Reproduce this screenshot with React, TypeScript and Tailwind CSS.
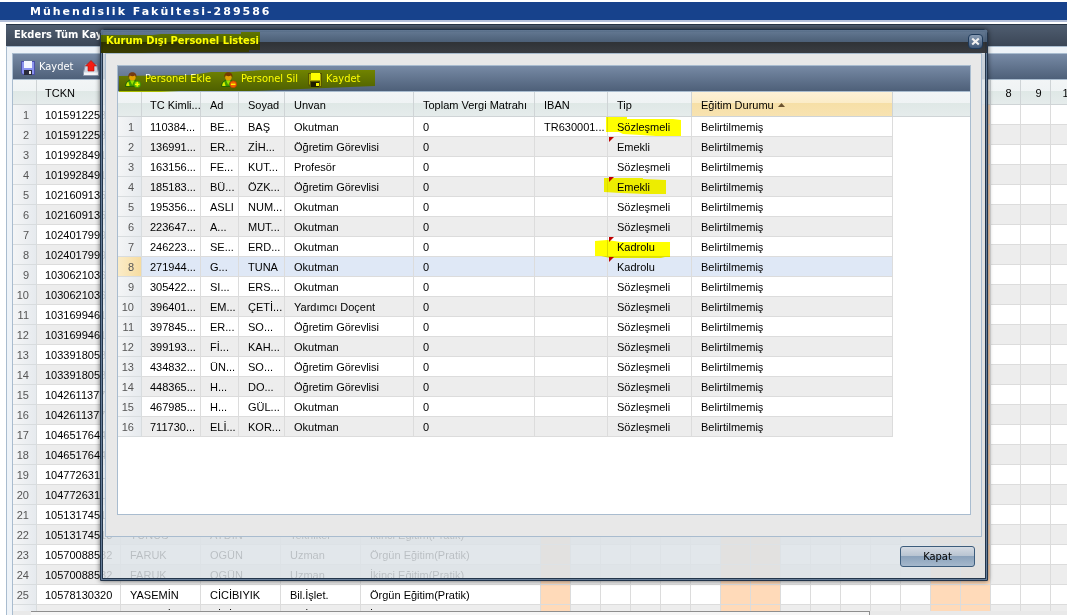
import React from 'react';

interface PersonRow {
  tc: string;
  ad: string;
  soyad: string;
  unvan: string;
  iban?: string;
  tip: string;
  dirty?: boolean;
}

const people: PersonRow[] = [
  { tc: '110384...', ad: 'BE...', soyad: 'BAŞ', unvan: 'Okutman', iban: 'TR630001...', tip: 'Sözleşmeli' },
  { tc: '136991...', ad: 'ER...', soyad: 'ZİH...', unvan: 'Öğretim Görevlisi', tip: 'Emekli', dirty: true },
  { tc: '163156...', ad: 'FE...', soyad: 'KUT...', unvan: 'Profesör', tip: 'Sözleşmeli' },
  { tc: '185183...', ad: 'BÜ...', soyad: 'ÖZK...', unvan: 'Öğretim Görevlisi', tip: 'Emekli', dirty: true },
  { tc: '195356...', ad: 'ASLI', soyad: 'NUM...', unvan: 'Okutman', tip: 'Sözleşmeli' },
  { tc: '223647...', ad: 'A...', soyad: 'MUT...', unvan: 'Okutman', tip: 'Sözleşmeli' },
  { tc: '246223...', ad: 'SE...', soyad: 'ERD...', unvan: 'Okutman', tip: 'Kadrolu', dirty: true },
  { tc: '271944...', ad: 'G...', soyad: 'TUNA', unvan: 'Okutman', tip: 'Kadrolu', dirty: true },
  { tc: '305422...', ad: 'SI...', soyad: 'ERS...', unvan: 'Okutman', tip: 'Sözleşmeli' },
  { tc: '396401...', ad: 'EM...', soyad: 'ÇETİ...', unvan: 'Yardımcı Doçent', tip: 'Sözleşmeli' },
  { tc: '397845...', ad: 'ER...', soyad: 'SO...', unvan: 'Öğretim Görevlisi', tip: 'Sözleşmeli' },
  { tc: '399193...', ad: 'Fİ...', soyad: 'KAH...', unvan: 'Okutman', tip: 'Sözleşmeli' },
  { tc: '434832...', ad: 'ÜN...', soyad: 'SO...', unvan: 'Öğretim Görevlisi', tip: 'Sözleşmeli' },
  { tc: '448365...', ad: 'H...', soyad: 'DO...', unvan: 'Öğretim Görevlisi', tip: 'Sözleşmeli' },
  { tc: '467985...', ad: 'H...', soyad: 'GÜL...', unvan: 'Okutman', tip: 'Sözleşmeli' },
  { tc: '711730...', ad: 'ELİ...', soyad: 'KOR...', unvan: 'Okutman', tip: 'Sözleşmeli' },
];

const SELECTED = 7;

// every person has one row for day classes and one for evening classes
const lecturers = [
  ['10159122538', '', '', ''],
  ['10199284911', '', '', ''],
  ['10216091356', '', '', ''],
  ['10240179999', '', '', ''],
  ['10306210366', '', '', ''],
  ['10316994611', '', '', ''],
  ['10339180588', '', '', ''],
  ['10426113772', '', '', ''],
  ['10465176444', '', '', ''],
  ['10477263112', '', '', ''],
  ['10513174518', 'YUNUS', 'AYDIN', 'Tekniker'],
  ['10570088582', 'FARUK', 'OGÜN', 'Uzman'],
  ['10578130320', 'YASEMİN', 'CİCİBIYIK', 'Bil.İşlet.'],
];

const days = [24, 25, 26, 27, 28, 29, 30, 31, 1, 2, 3, 4, 5, 6, 7, 8, 9, 10];
const weekend = [24, 30, 31, 6, 7];

const thBase = 'h-[25px] border-r border-b border-[#cfd4d6] pt-0.5 text-left font-normal whitespace-nowrap overflow-hidden';
const tdBase = 'h-5 border-r border-b border-[#dcdcdc] pt-0.5 whitespace-nowrap overflow-hidden';
const thClass = `${thBase} pl-[9px]`;
const tdClass = `${tdBase} pl-[9px]`;
const numClass = 'h-5 border-r border-b border-[#d8dcde] pt-0.5 pr-[7px] text-right text-[#555]';
const headFill = 'bg-[linear-gradient(#f2f5f6_0%,#eff3f4_45%,#dfe8e6_46%,#e6ecec_100%)]';
const toolbar = 'flex h-[26px] items-center border-b border-[#a9bccf] bg-linear-to-b from-[#778aa5] to-[#4e6079] pt-0.5 text-[11px] text-white';

const FloppyIcon = () => (
  <svg viewBox="0 0 14 14" className="size-3.5" aria-hidden="true">
    <path d="M0 0H14V14H2L0 12Z" fill="#4c50a8" />
    <path d="M1 1H3V7H11V1H13V13H2L1 12Z" fill="#8a92ee" />
    <rect x="3" y="0" width="8" height="7" fill="#f4f6ff" />
    <rect x="3" y="9" width="8" height="5" fill="#2b2c3c" />
    <rect x="8" y="10" width="2" height="3" fill="#f0f0f0" />
  </svg>
);

const FloppyPlainIcon = () => (
  <svg viewBox="0 0 14 14" className="size-3.5" aria-hidden="true">
    <path d="M0 0H14V14H2L0 12Z" fill="#55554a" />
    <path d="M1 1H13V13H12V8H2V12L1 11Z" fill="#a8a8a0" />
    <rect x="3" y="0" width="9" height="7" fill="#ffffff" />
    <rect x="3" y="9" width="8" height="5" fill="#1c1c14" />
    <rect x="8" y="10" width="3" height="3" fill="#f6f6f6" />
  </svg>
);

const UploadIcon = () => (
  <svg viewBox="0 0 16 16" className="size-4" aria-hidden="true">
    <path d="M2.5 4.5H13.5L15.5 12.5V15.5H.5V12.5Z" fill="#cfd7e3" stroke="#8b97ab" />
    <path d="M1 12.5H15V15H1Z" fill="#f3f5f9" />
    <path d="M8 .5L13.5 6H11V11H5V6H2.5Z" fill="#f51d14" stroke="#b00e08" strokeWidth=".6" />
  </svg>
);

const PersonIcon = ({ remove = false }: { remove?: boolean }) => (
  <svg viewBox="0 0 16 16" className="size-4" aria-hidden="true">
    <path d="M.6 14.4C.6 10.5 3 8 7 8S12.6 10 12.8 14.4Z" fill="#3f9c2c" stroke="#185a18" strokeWidth=".8" />
    <path d="M5 8.3L7.2 13L9.6 8.3Z" fill="#9be05c" />
    <path d="M1.2 14C1.4 11.6 2.2 10.4 3.4 9.8L4.6 14Z" fill="#d8ecc4" />
    <circle cx="7.4" cy="5.2" r="3.2" fill="#e3a064" />
    <path d="M3.4 5.6C2.8 1.8 5 .2 7.4 .2S12 1.8 11.4 5.6L10 3.6C8.4 4.4 6.4 4.4 4.8 3.6Z" fill="#753b12" />
    <circle cx="12.2" cy="12.3" r="3.4" fill={remove ? '#f2642c' : '#6fc836'} stroke={remove ? '#c23a10' : '#37861a'} strokeWidth=".7" />
    <path d={remove ? 'M10 12.3H14.4' : 'M10 12.3H14.4M12.2 10.1V14.5'} stroke="#fff" strokeWidth="1.3" />
  </svg>
);

const ToolButton = ({ icon, label }: { icon: React.ReactNode; label: string }) => (
  <button type="button" className="flex items-center gap-1">
    {icon}
    {label}
  </button>
);

const BackgroundGrid = () => (
  <div className="min-h-0 flex-1 overflow-hidden bg-white">
    <table className="w-[1068px] table-fixed border-separate border-spacing-0 font-['Liberation_Sans',Arial,sans-serif]">
      <colgroup>
        <col className="w-6" />
        <col className="w-[84px]" />
        <col className="w-20" />
        <col className="w-20" />
        <col className="w-20" />
        <col className="w-[180px]" />
        {days.map((d) => <col key={d} className="w-[30px]" />)}
      </colgroup>
      <thead className={headFill}>
        <tr>
          <th className={thClass}></th>
          <th className={`${thBase} pl-2`}>TCKN</th>
          <th className={thClass}>Ad</th>
          <th className={thClass}>Soyad</th>
          <th className={thClass}>Unvan</th>
          <th className={thClass}>Öğretim Türü</th>
          {days.map((d) => (
            <th key={d} className="h-[25px] border-r border-b border-[#cfd4d6] pt-0.5 pl-1.5 font-normal">{d}</th>
          ))}
        </tr>
      </thead>
      <tbody>
        {lecturers.flatMap(([tckn, ad, soyad, unvan], i) => [0, 1].map((k) => (
          <tr key={`${tckn}-${k}`} className={k ? 'bg-[#ededed]' : 'bg-white'}>
            <td className={`${numClass} bg-linear-to-r from-[#f4f5f6] to-[#e6eaee]`}>{i * 2 + k + 1}</td>
            <td className={`${tdBase} pl-2`}>{tckn}</td>
            <td className={tdClass}>{ad}</td>
            <td className={tdClass}>{soyad}</td>
            <td className={tdClass}>{unvan}</td>
            <td className={tdClass}>{ad && (k ? 'İkinci Eğitim(Pratik)' : 'Örgün Eğitim(Pratik)')}</td>
            {days.map((d) => (
              <td key={d} className={`border-r border-b border-[#dcdcdc] ${weekend.includes(d) ? 'bg-[#ffdab9]' : ''}`}></td>
            ))}
          </tr>
        )))}
      </tbody>
    </table>
  </div>
);

const PersonGrid = () => (
  <div className="bg-white pb-[77px]">
    <table className="w-full table-fixed border-separate border-spacing-0 font-['Liberation_Sans',Arial,sans-serif]">
      <colgroup>
        <col className="w-6" />
        <col className="w-[59px]" />
        <col className="w-[38px]" />
        <col className="w-[46px]" />
        <col className="w-[129px]" />
        <col className="w-[121px]" />
        <col className="w-[73px]" />
        <col className="w-[84px]" />
        <col className="w-[201px]" />
        <col />
      </colgroup>
      <thead className={headFill}>
        <tr>
          <th className={thClass}></th>
          <th className={`${thBase} pl-2`}>TC Kimli...</th>
          <th className={thClass}>Ad</th>
          <th className={thClass}>Soyad</th>
          <th className={thClass}>Unvan</th>
          <th className={thClass}>Toplam Vergi Matrahı</th>
          <th className={thClass}>IBAN</th>
          <th className={thClass}>Tip</th>
          <th className={`${thClass} bg-[linear-gradient(#fdf1d6_0%,#fbecc8_45%,#f6dfa6_46%,#f8e3b1_100%)]`}>
            <span className="flex items-center gap-1">
              Eğitim Durumu
              <svg viewBox="0 0 7 4" className="h-1 w-[7px]" aria-hidden="true"><path d="M3.5 0L7 4H0Z" fill="#6b5330" /></svg>
            </span>
          </th>
          <th className="border-b border-[#cfd4d6]"></th>
        </tr>
      </thead>
      <tbody>
        {people.map((p, i) => (
          <tr key={p.tc} className={i === SELECTED ? 'bg-[#dfe8f6]' : i % 2 ? 'bg-[#ededed]' : 'bg-white'}>
            <td className={`${numClass} bg-linear-to-r ${i === SELECTED ? 'from-[#fbecc8] to-[#f6dca0]' : 'from-[#f4f5f6] to-[#e6eaee]'}`}>{i + 1}</td>
            <td className={`${tdBase} pl-2`}>{p.tc}</td>
            <td className={tdClass}>{p.ad}</td>
            <td className={tdClass}>{p.soyad}</td>
            <td className={tdClass}>{p.unvan}</td>
            <td className={tdClass}>0</td>
            <td className={tdClass}>{p.iban}</td>
            <td className={`${tdClass} relative`}>
              {p.dirty && (
                <svg viewBox="0 0 5 5" className="absolute top-0 left-px size-[5px]" aria-hidden="true"><path d="M0 0H5L0 5Z" fill="#c00000" /></svg>
              )}
              {p.tip}
            </td>
            <td className={tdClass}>Belirtilmemiş</td>
            <td className="bg-white"></td>
          </tr>
        ))}
      </tbody>
    </table>
  </div>
);

// marker pen strokes drawn over the window
const Highlights = () => (
  <svg className="pointer-events-none absolute top-0 left-0 h-[260px] w-[600px] mix-blend-multiply" fill="#ffff00" aria-hidden="true">
    <path d="M0 5L52 5L60 4L140 4V2H159V20H148V22H60L40 23H0Z" />
    <path d="M18 46L90 45L110 42H130L162 40H274V56L200 59L150 61H78L60 62H18Z" />
    <path d="M505 87H526V89H572L580 90V106H555L540 105L522 104L518 102H505Z" />
    <path d="M503 148H542V149L565 150V164H545L520 163L503 162Z" />
    <path d="M494 211L506 210L520 212H569V227H564L560 228H509L500 226H494Z" />
  </svg>
);

const PersonWindow = () => (
  <div
    role="dialog"
    aria-labelledby="window-title"
    className="absolute top-[29px] right-[79px] left-[100px] rounded-t-sm border border-[#22344a] bg-[#dce2e7]/84 pb-0.5 shadow-[inset_0_0_0_1px_#647b97,inset_0_0_0_2px_#24364b,0_0_5px_rgba(0,0,0,0.6)]"
  >
    <div className="flex h-[23px] items-center justify-between bg-[linear-gradient(rgba(96,118,145,0.95)_0%,rgba(72,92,116,0.97)_52%,rgba(43,46,50,0.97)_53%,rgba(52,55,60,0.97)_100%)] pr-1 pl-[5px]">
      <h2 id="window-title" className="text-[11px] font-bold text-white">Kurum Dışı Personel Listesi</h2>
      <button type="button" aria-label="Close" className="flex size-[15px] items-center justify-center rounded-sm border border-[#1e3a5a] bg-linear-to-b from-[#8b9eb5] to-[#3f5878]">
        <svg viewBox="0 0 9 9" className="size-[9px]" aria-hidden="true"><path d="M1.2 1.5L7.8 7.5M7.8 1.5L1.2 7.5" stroke="#f2f2f2" strokeWidth="2.2" /></svg>
      </button>
    </div>
    <div className="mr-[5px] ml-1 border border-[#a9bccf] bg-[#e8e8e8] pt-[11px] pr-2.5 pb-[21px] pl-[11px]">
      <div className="border border-[#a9bccf]">
        <div className={`${toolbar} gap-2.5 pl-[7px]`}>
          <ToolButton icon={<PersonIcon />} label="Personel Ekle" />
          <ToolButton icon={<PersonIcon remove />} label="Personel Sil" />
          <ToolButton icon={<FloppyPlainIcon />} label="Kaydet" />
        </div>
        <PersonGrid />
      </div>
    </div>
    <div className="flex justify-end pt-[9px] pr-3 pb-[11px]">
      <button type="button" className="h-[21px] w-[75px] rounded-[3px] border border-[#3c5c7c] bg-[linear-gradient(#d5dbe3_0%,#b7c3d1_48%,#8ba2bb_50%,#a5b8cc_100%)] pt-0.5 text-[11px] text-black">
        Kapat
      </button>
    </div>
    <Highlights />
  </div>
);

const App: React.FC = () => {
  return (
    <div className="relative flex h-screen flex-col overflow-hidden bg-white pt-0.5 font-['DejaVu_Sans_Condensed','DejaVu_Sans',sans-serif] text-[11px] text-black">
      <header className="flex h-5 shrink-0 items-center border-b-2 border-[#b3bfd9] bg-[#17428c] pt-0.5 pl-[30px]">
        <h1 className="font-['DejaVu_Sans',sans-serif] text-[11px] font-bold tracking-[2px] text-white">Mühendislik Fakültesi-289586</h1>
      </header>
      <main className="mt-0.5 ml-1.5 flex min-h-0 flex-1 flex-col">
        <div className="flex h-[23px] shrink-0 items-center border-t border-b border-t-[#263445] border-b-[#a9bccf] bg-linear-to-b from-[#4f5d70] to-[#3b4656] pl-2">
          <h2 className="text-[11px] font-bold text-white">Ekders Tüm Kayıtlar</h2>
        </div>
        <div className="flex min-h-0 flex-1 flex-col border-l border-[#a9bccf] bg-[#eef3f8] pt-1.5 pl-[5px]">
          <div className="flex min-h-0 flex-1 flex-col border-t border-l border-[#a9bccf]">
            <div className={`${toolbar} shrink-0 gap-2.5 pl-2`}>
              <ToolButton icon={<FloppyIcon />} label="Kaydet" />
              <ToolButton icon={<UploadIcon />} label="" />
            </div>
            <BackgroundGrid />
            <div className="h-1 shrink-0 bg-[#e9e9e9] pl-[18px]">
              <div className="h-full w-[81%] border-t border-r border-[#8e8e8e] bg-[#f6f6f6]"></div>
            </div>
          </div>
        </div>
      </main>
      <PersonWindow />
    </div>
  );
};

export default App;
